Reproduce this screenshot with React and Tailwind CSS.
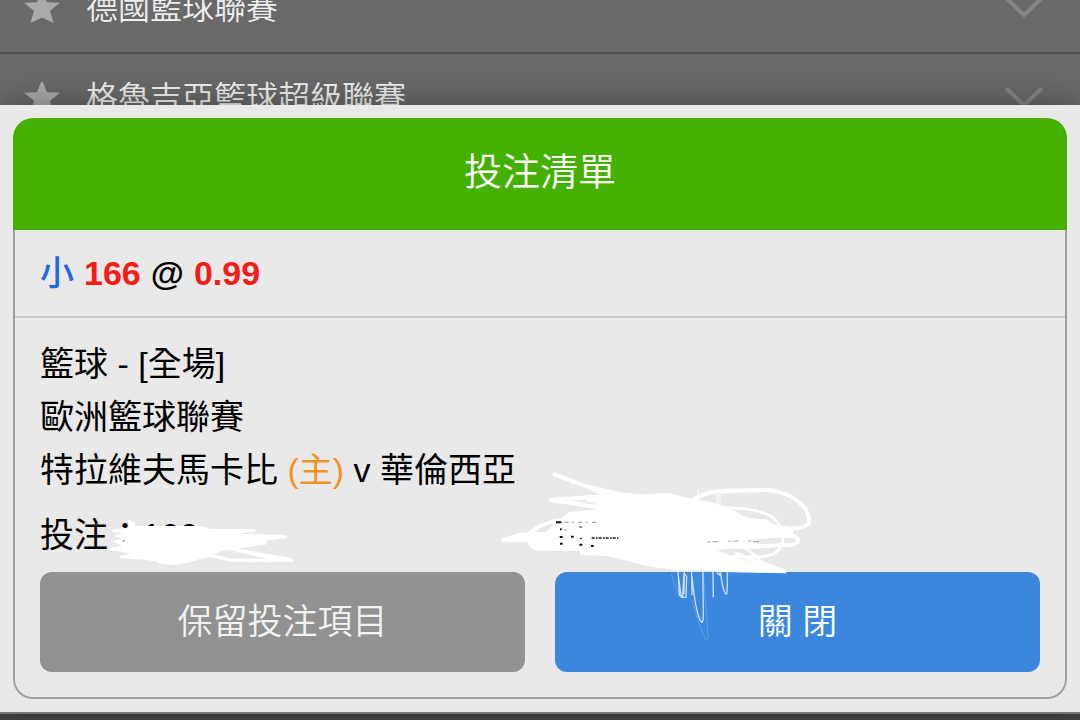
const leagues = [
  { id: 1, name: "德國籃球聯賽" },
  { id: 2, name: "格魯吉亞籃球超級聯賽" },
];

function Star() {
  return (
    <svg
      viewBox="0 0 36 34"
      className="h-8 w-9"
      preserveAspectRatio="none"
      fill="#aaaaaa"
    >
      <path d="M18 -2l5 13L36 11.4 26 20 29.6 33 18 27 6.4 33 10 20 0 11.4 13 11z" />
    </svg>
  );
}

function Chevron() {
  return (
    <svg
      viewBox="0 0 40 20"
      className="h-5 w-10"
      fill="none"
      stroke="#858585"
      strokeWidth="4"
    >
      <path d="M2 0l18 17L38 0" />
    </svg>
  );
}

function LeagueList() {
  return (
    <div className="h-[105px] overflow-hidden bg-[#696969]">
      <ul className="-mt-9">
        {leagues.map((league) => (
          <li key={league.id} className="border-b-2 border-[#505050]">
            <button
              type="button"
              className="flex h-[88px] w-full items-center pr-9 pl-6 text-left"
            >
              <Star />
              <span className="ml-[26px] flex-1 text-[32px] leading-10 font-[350] text-[#eeeeee]">
                {league.name}
              </span>
              <Chevron />
            </button>
          </li>
        ))}
      </ul>
    </div>
  );
}

// white marker over the stake amount
function StakeScribble() {
  return (
    <svg
      viewBox="300 30 600 180"
      className="pointer-events-none absolute top-px left-[60px] h-[60px] w-[200px]"
      fill="none"
      stroke="#ffffff"
      strokeLinecap="round"
      strokeLinejoin="round"
    >
      <path
        fill="#ffffff"
        strokeWidth="4"
        d="M386 62L404 68 402 80 600 80 630 88 762 92 700 102 798 122 796 132 740 140 660 152 620 172 560 180 500 190 478 184 440 178 362 172 400 160 334 148 372 138 342 124 380 114 346 108 376 98 342 92 388 86z"
      />
      <path
        strokeWidth="10"
        d="M342 92L762 92M640 104L855 110 700 128M334 148L480 140M366 170L450 166M478 186Q520 196 590 176M660 140L876 180 800 182 690 180 620 164M700 148L830 178"
      />
      <path stroke="#222222" strokeWidth="3" d="M370 123l2-1" />
    </svg>
  );
}

// white marker over the payout, with thin strokes running onto the button
function PayoutScribble() {
  return (
    <svg
      viewBox="0 0 1020 570"
      className="pointer-events-none absolute -top-[49px] -left-[65px] h-[190px] w-[340px]"
      fill="none"
      stroke="#ffffff"
      strokeLinecap="round"
      strokeLinejoin="round"
    >
      <path
        fill="#ffffff"
        strokeWidth="4"
        d="M250 62L340 96 450 104 540 102 600 118 660 128 720 148 770 174 832 184 850 196 908 214 905 228 820 232 790 238 812 262 720 264 670 268 740 296 820 318 884 334 800 334 700 330 560 328 480 318 400 298 340 284 276 282 270 270 130 268 122 246 80 240 84 220 170 218 200 184 240 158 300 152 380 148 290 122 290 108 340 106z"
      />
      <path
        strokeWidth="12"
        d="M194 43L280 76 420 110M182 120L300 112M182 120L420 156M200 182Q140 196 122 220Q108 256 140 266L280 266M40 240L90 224 280 220M40 240L280 238M610 118Q650 92 720 92L830 90Q900 94 944 144Q962 172 956 190Q944 206 900 206L780 190M740 184L830 184M800 232Q870 224 910 228Q940 242 910 254L780 260M276 280L500 286M740 282L884 334M700 330L884 334"
      />
      <path
        strokeWidth="8"
        d="M690 144Q800 142 846 170Q890 210 878 240Q872 284 820 290L700 290M740 250Q800 282 820 314"
      />
      <path
        strokeWidth="4"
        strokeOpacity=".75"
        d="M562 290L568 406 578 408 582 340 590 350 588 412 574 412 564 340M604 290L606 404M584 290L582 400M606 350Q616 450 630 480Q640 500 640 460L638 290M668 280L670 410M680 270L682 340 690 346 692 280M692 340Q700 404 710 402Q714 380 710 290M624 90L628 140M682 92V140M690 92V140"
      />
      <path
        strokeWidth="3"
        strokeOpacity=".2"
        d="M544 340Q556 390 570 406M606 420Q630 510 646 536Q658 548 652 500L640 340"
      />
      <g stroke="#111111" strokeWidth="4" strokeLinecap="butt">
        <path strokeWidth="6" d="M198 187h16M210 208h5M209 231h9M210 251h8M243 230h8M268 254h9M303 258h8" />
        <path
          stroke="#555555"
          strokeWidth="2"
          strokeDasharray="12 10 5 14"
          d="M224 187h96"
        />
        <path strokeDasharray="9 4 5 3" d="M305 234h80" />
        <path strokeWidth="3" d="M268 201h8M270 235h6M224 210h3" />
        <path
          stroke="#777777"
          strokeWidth="2"
          strokeDasharray="10 5 18 28"
          d="M652 246l52-2 60-2 56 5"
        />
      </g>
    </svg>
  );
}

function BetSlip() {
  return (
    <section className="text-[34px] text-black">
      <h1 className="flex h-28 items-center justify-center rounded-t-[20px] bg-[#44b000] pb-1 text-[38px] font-[350] text-white">
        投注清單
      </h1>
      <div className="rounded-b-[20px] border-2 border-t-0 border-[#9da1a3]">
        {/* odds */}
        <p className="flex h-[88px] items-center gap-2.5 border-b-2 border-[#c8c8c8] px-[25px] leading-[53px] font-bold text-[#f51b17]">
          <span className="font-medium text-[#2068e0]">小</span>
          <span>166</span>
          <span className="text-black">@</span>
          <span>0.99</span>
        </p>
        <div className="px-[25px] pt-5 pb-[25px]">
          {/* match */}
          <div className="leading-[53px]">
            <p>籃球 - [全場]</p>
            <p>歐洲籃球聯賽</p>
            <p>
              特拉維夫馬卡比 <span className="text-[#f7921e]">(主)</span> v
              華倫西亞
            </p>
          </div>
          {/* stake */}
          <div className="mt-3 grid grid-cols-2 gap-[30px] leading-[53px]">
            <div className="relative h-[53px]">
              <p>投注：100</p>
              <StakeScribble />
            </div>
            <div className="relative h-[53px]">
              <PayoutScribble />
            </div>
          </div>
          {/* actions */}
          <div className="mt-2.5 grid grid-cols-2 gap-[30px] text-[35px] font-[350] text-white">
            <button
              type="button"
              className="h-[100px] rounded-xl bg-[#929292] text-[#f2f2f2]"
            >
              保留投注項目
            </button>
            <button type="button" className="h-[100px] rounded-xl bg-[#3a87dd]">
              關 閉
            </button>
          </div>
        </div>
      </div>
    </section>
  );
}

function App() {
  return (
    <div className="min-h-screen bg-[#474747] font-['Liberation_Sans','Noto_Sans_CJK_TC',sans-serif]">
      <LeagueList />
      <main className="relative border-b-2 border-[#777777] bg-[#e9e9e9] p-[13px] shadow-[0_0_30px_rgba(0,0,0,0.35)]">
        <BetSlip />
      </main>
    </div>
  );
}

export default App;
